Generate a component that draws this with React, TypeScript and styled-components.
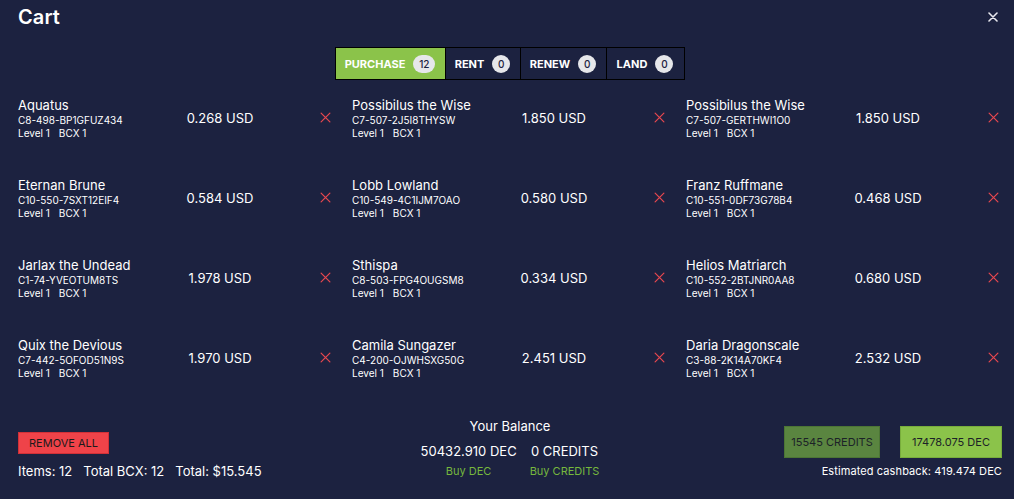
import styled, { createGlobalStyle } from "styled-components";

const GlobalStyle = createGlobalStyle`
  html, body {
    margin: 0;
    padding: 0;
    background: #1c2240;
  }
  body {
    font-family: Inter, "Noto Sans", sans-serif;
    color: #ffffff;
  }
`;

const Modal = styled.div`
  width: 1014px;
  height: 499px;
  box-sizing: border-box;
  background: #1c2240;
  padding: 4px 12px 0 18px;
  display: flex;
  flex-direction: column;
`;

const Header = styled.div`
  display: flex;
  justify-content: space-between;
  align-items: center;
  height: 26px;
`;

const Title = styled.h2`
  margin: 0;
  font-size: 20px;
  font-weight: 600;
  letter-spacing: 0.1px;
`;

const CloseButton = styled.button`
  background: none;
  border: none;
  padding: 0;
  margin-right: 1px;
  width: 16px;
  height: 16px;
  display: flex;
  align-items: center;
  justify-content: center;
  cursor: pointer;
`;

const Tabs = styled.div`
  display: flex;
  justify-content: center;
  margin-top: 17px;
`;

const Tab = styled.button<{ $active?: boolean; $width: number }>`
  width: ${(p) => p.$width}px;
  height: 33px;
  box-sizing: border-box;
  border: 1px solid #000000;
  margin-left: -1px;
  background: ${(p) => (p.$active ? "#8bc34a" : "#1c2240")};
  color: #ffffff;
  font-family: Inter, sans-serif;
  font-size: 11px;
  font-weight: 700;
  display: flex;
  align-items: center;
  justify-content: center;
  gap: 8px;
  padding: 0;
`;

const Badge = styled.span<{ $wide?: boolean }>`
  min-width: ${(p) => (p.$wide ? "22px" : "18px")};
  height: 18px;
  border-radius: 9px;
  background: #e6e7ea;
  color: #1c2240;
  font-size: 10px;
  font-weight: 500;
  display: inline-flex;
  align-items: center;
  justify-content: center;
`;

const Grid = styled.div`
  display: grid;
  grid-template-columns: repeat(3, 322px);
  column-gap: 12px;
  row-gap: 37px;
  margin-top: 17px;
`;

const Item = styled.div`
  display: grid;
  grid-template-columns: 150px 104px 1fr;
  align-items: center;
  height: 43px;
`;

const Info = styled.div`
  display: flex;
  flex-direction: column;
`;

const Name = styled.div`
  font-size: 13px;
  line-height: 16px;
  white-space: nowrap;
`;

const Uid = styled.div`
  font-size: 10px;
  line-height: 14px;
  white-space: nowrap;
`;

const Meta = styled.div`
  font-size: 10px;
  line-height: 13px;
  display: flex;
  gap: 9px;
`;

const Price = styled.div`
  font-size: 13px;
  text-align: center;
  white-space: nowrap;
  margin-top: -2px;
`;

const Remove = styled.button`
  justify-self: end;
  margin-right: 9px;
  margin-top: -2px;
  background: none;
  border: none;
  padding: 0;
  display: flex;
  cursor: pointer;
`;

const Footer = styled.div`
  display: grid;
  grid-template-columns: 1fr auto 1fr;
  align-items: end;
  margin-top: auto;
  padding-bottom: 20px;
`;

const FooterLeft = styled.div`
  display: flex;
  flex-direction: column;
  align-items: flex-start;
  gap: 9px;
`;

const DangerButton = styled.button`
  background: #ef4349;
  border: 1px solid #d23037;
  color: #1a1a1a;
  font-family: Inter, sans-serif;
  font-size: 11px;
  height: 22px;
  padding: 0 10px;
  margin-top: -1px;
`;

const Totals = styled.div`
  font-size: 13px;
  display: flex;
  gap: 11px;
`;

const Balance = styled.div`
  display: flex;
  flex-direction: column;
  align-items: center;
  padding-bottom: 1px;
`;

const BalanceTitle = styled.div`
  font-size: 13px;
  margin-bottom: 9px;
`;

const BalanceRow = styled.div`
  display: grid;
  grid-template-columns: auto auto;
  column-gap: 13px;
  justify-items: center;
`;

const BalanceValue = styled.div`
  font-size: 13px;
  line-height: 16px;
`;

const BuyLink = styled.a`
  color: #76b83d;
  font-size: 11px;
  margin-top: 5px;
  text-decoration: none;
`;

const FooterRight = styled.div`
  display: flex;
  flex-direction: column;
  align-items: flex-end;
  gap: 6px;
  padding-bottom: 1px;
`;

const PayButtons = styled.div`
  display: flex;
  gap: 20px;
`;

const PayButton = styled.button<{ $tone: "dark" | "light" }>`
  height: 32px;
  padding: 0;
  border: 1px solid ${(p) => (p.$tone === "dark" ? "#4c7535" : "#78ad3c")};
  background: ${(p) => (p.$tone === "dark" ? "#5a8540" : "#8bc34a")};
  color: #1c2228;
  font-family: Inter, sans-serif;
  font-size: 11px;
  width: ${(p) => (p.$tone === "dark" ? "96px" : "102px")};
`;

const Cashback = styled.div`
  font-size: 11px;
  letter-spacing: 0.1px;
`;

type CartItem = { name: string; uid: string; price: string };

const items: CartItem[] = [
  { name: "Aquatus", uid: "C8-498-BP1GFUZ434", price: "0.268" },
  { name: "Possibilus the Wise", uid: "C7-507-2J5I8THYSW", price: "1.850" },
  { name: "Possibilus the Wise", uid: "C7-507-GERTHWI1O0", price: "1.850" },
  { name: "Eternan Brune", uid: "C10-550-7SXT12EIF4", price: "0.584" },
  { name: "Lobb Lowland", uid: "C10-549-4C1IJM7OAO", price: "0.580" },
  { name: "Franz Ruffmane", uid: "C10-551-0DF73G78B4", price: "0.468" },
  { name: "Jarlax the Undead", uid: "C1-74-YVEOTUM8TS", price: "1.978" },
  { name: "Sthispa", uid: "C8-503-FPG4OUGSM8", price: "0.334" },
  { name: "Helios Matriarch", uid: "C10-552-2BTJNR0AA8", price: "0.680" },
  { name: "Quix the Devious", uid: "C7-442-5OFOD51N9S", price: "1.970" },
  { name: "Camila Sungazer", uid: "C4-200-OJWHSXG50G", price: "2.451" },
  { name: "Daria Dragonscale", uid: "C3-88-2K14A70KF4", price: "2.532" },
];

const tabs = [
  { label: "PURCHASE", count: 12, width: 111, active: true },
  { label: "RENT", count: 0, width: 76 },
  { label: "RENEW", count: 0, width: 87 },
  { label: "LAND", count: 0, width: 79 },
];

const Cross = ({ size, color, width }: { size: number; color: string; width: number }) => (
  <svg width={size} height={size} viewBox="0 0 10 10">
    <path d="M1 1 L9 9 M9 1 L1 9" stroke={color} strokeWidth={width} strokeLinecap="round" />
  </svg>
);

export default function App() {
  return (
    <>
      <GlobalStyle />
      <Modal>
        <Header>
          <Title>Cart</Title>
          <CloseButton>
            <Cross size={10} color="#e8e8ee" width={1.6} />
          </CloseButton>
        </Header>

        <Tabs>
          {tabs.map((t) => (
            <Tab key={t.label} $active={t.active} $width={t.width}>
              {t.label}
              <Badge $wide={t.count > 9}>{t.count}</Badge>
            </Tab>
          ))}
        </Tabs>

        <Grid>
          {items.map((it) => (
            <Item key={it.uid}>
              <Info>
                <Name>{it.name}</Name>
                <Uid>{it.uid}</Uid>
                <Meta>
                  <span>Level 1</span>
                  <span>BCX 1</span>
                </Meta>
              </Info>
              <Price>{it.price} USD</Price>
              <Remove>
                <Cross size={11} color="#e8474f" width={1.1} />
              </Remove>
            </Item>
          ))}
        </Grid>

        <Footer>
          <FooterLeft>
            <DangerButton>REMOVE ALL</DangerButton>
            <Totals>
              <span>Items: 12</span>
              <span>Total BCX: 12</span>
              <span>Total: $15.545</span>
            </Totals>
          </FooterLeft>

          <Balance>
            <BalanceTitle>Your Balance</BalanceTitle>
            <BalanceRow>
              <BalanceValue>50432.910 DEC</BalanceValue>
              <BalanceValue>0 CREDITS</BalanceValue>
              <BuyLink href="#">Buy DEC</BuyLink>
              <BuyLink href="#">Buy CREDITS</BuyLink>
            </BalanceRow>
          </Balance>

          <FooterRight>
            <PayButtons>
              <PayButton $tone="dark">15545 CREDITS</PayButton>
              <PayButton $tone="light">17478.075 DEC</PayButton>
            </PayButtons>
            <Cashback>Estimated cashback: 419.474 DEC</Cashback>
          </FooterRight>
        </Footer>
      </Modal>
    </>
  );
}
